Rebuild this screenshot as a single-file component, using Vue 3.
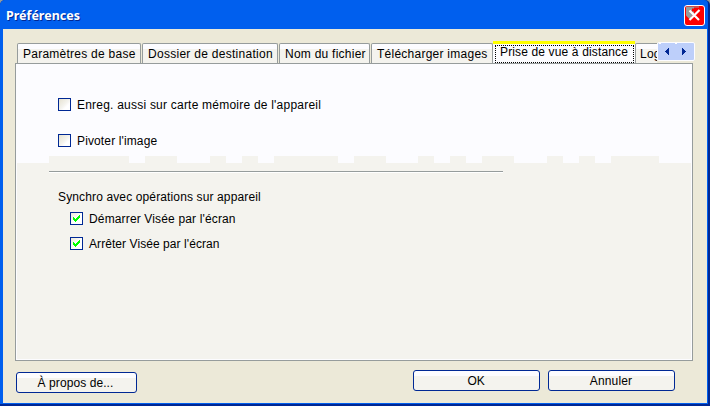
<script setup>
const tabs = [
  { label: 'Paramètres de base', cls: 't1' },
  { label: 'Dossier de destination', cls: 't2' },
  { label: 'Nom du fichier', cls: 't3' },
  { label: 'Télécharger images', cls: 't4' },
  { label: 'Prise de vue à distance', cls: 'active' },
  { label: 'Log', cls: 't6' },
]
const notches = [
  [49, 80], [145, 32], [210, 16], [242, 16], [274, 64], [354, 32], [418, 16],
  [450, 16], [482, 32], [547, 16], [579, 16], [611, 48],
]
</script>

<template>
  <div class="window">
    <header class="titlebar">
      <h1>Préférences</h1>
      <button class="close" aria-label="Fermer">
        <svg width="21" height="21" viewBox="0 0 21 21">
          <rect x=".5" y=".5" width="20" height="20" rx="2.5" fill="#ff0000" stroke="#fff" />
          <path d="M2 1.5h13v1h-5v1H8v3h2v3l-3 2 1 2H5l-3-3z" fill="#969c9c" />
          <path d="M5.5 5.5l9.5 9.5M15.5 5l-10 10" stroke="#fff" stroke-width="2.2" />
        </svg>
      </button>
    </header>
    <main class="client">
      <div class="tabrow">
        <nav class="tabs">
          <button v-for="t in tabs" :key="t.label" class="tab" :class="t.cls">
            <span>{{ t.label }}</span>
          </button>
        </nav>
        <div class="scroller">
          <svg width="38" height="19" viewBox="0 0 38 19" shape-rendering="crispEdges">
            <path d="M8 9h1v-1h1v-1h1v-1h1v7h-1v-1h-1v-1h-1v-1h-1z" fill="#002894" />
            <path d="M29 9h-1v-1h-1v-1h-1v-1h-1v7h1v-1h1v-1h1v-1h1z" fill="#002894" />
            <path d="M2 1h2v1H2zM18 1h2v1h-2z" fill="#fff" />
          </svg>
        </div>
      </div>
      <section class="panel">
        <div class="upper">
          <label class="check"><i class="box"></i><span class="c1">Enreg. aussi sur carte mémoire de l'appareil</span></label>
          <label class="check"><i class="box"></i><span class="c2">Pivoter l'image</span></label>
        </div>
        <svg class="edge" width="674" height="7" viewBox="17 0 674 7" shape-rendering="crispEdges">
          <rect x="17" width="674" height="7" fill="#fcfcff" />
          <rect v-for="n in notches" :key="n[0]" :x="n[0]" y="0" :width="n[1]" height="7" fill="#f4f3ee" />
        </svg>
        <div class="lower">
          <div class="rule"></div>
          <p><span class="c3">Synchro avec opérations sur appareil</span></p>
          <label class="check sub"><i class="box on"><svg width="11" height="11" viewBox="0 0 11 11" shape-rendering="crispEdges"><path d="M2 4h1v1h1v1h1v-1h1v-1h1v-1h1v-1h1v3h-1v1h-1v1h-1v1h-1v1h-1v-1h-1v-1h-1z" fill="#00ff00" /></svg></i><span class="c4">Démarrer Visée par l'écran</span></label>
          <label class="check sub"><i class="box on"><svg width="11" height="11" viewBox="0 0 11 11" shape-rendering="crispEdges"><path d="M2 4h1v1h1v1h1v-1h1v-1h1v-1h1v-1h1v3h-1v1h-1v1h-1v1h-1v1h-1v-1h-1v-1h-1z" fill="#00ff00" /></svg></i><span class="c5">Arrêter Visée par l'écran</span></label>
        </div>
      </section>
      <footer class="actions">
        <button class="btn about"><span>À propos de...</span></button>
        <button class="btn ok"><span>OK</span></button>
        <button class="btn cancel"><span>Annuler</span></button>
      </footer>
    </main>
  </div>
</template>

<style>
body { margin: 0; background: #969c9c; overflow: hidden; }
</style>

<style scoped>
* { box-sizing: border-box; }
.window {
  width: 710px; height: 406px; padding: 0 2px 2px 0;
  background: #002894; border-radius: 5px 5px 0 0;
  font: 12px/14px "Liberation Sans", Arial, sans-serif; color: #000; letter-spacing: .22px;
}
.titlebar {
  display: flex; justify-content: space-between; width: 708px; height: 29px;
  padding: 5px 3px 0 6px; background: #005fee; border-radius: 5px 4px 0 0;
}
h1 {
  margin: 2px 0 0; color: #fff; text-shadow: 1px 1px 0 #002894;
  font: bold 12.5px/18px "Noto Sans", "Open Sans", sans-serif; letter-spacing: 0;
}
button { padding: 0; border: 0; background: none; font: inherit; letter-spacing: inherit; color: inherit; }
.close { width: 21px; height: 21px; }
svg { display: block; }
span { white-space: nowrap; }
.client {
  width: 708px; height: 375px; padding: 12px 0 0 12px;
  border: solid #005fee; border-width: 0 1px 1px 3px; background: #ece9d8;
}
.tabrow { display: flex; align-items: flex-start; height: 22px; width: 680px; }
.tabs { display: flex; align-items: flex-end; width: 642px; height: 22px; padding-left: 2px; overflow: hidden; flex: none; }
.tab {
  flex: none; height: 20px; margin-right: 1px; text-align: left; padding: 0 0 0 5px;
  border: 1px solid #969c9c; border-bottom: 0; border-radius: 2px 2px 0 0;
  background: linear-gradient(#fcfcff 0 5px, #f4f3ee 5px);
}
.t1 { width: 124px; letter-spacing: .25px; }
.t2 { width: 136px; letter-spacing: .28px; }
.t3 { width: 91px; letter-spacing: .25px; }
.t4 { width: 122px; margin-right: 0; letter-spacing: .25px; }
.t6 { width: 60px; padding-left: 4px; }
.tab.active {
  width: 142px; height: 23px; margin: 0 0 -1px; padding: 0 1px 1px 2px;
  border: 0; border-top: 3px solid #ffff00; border-radius: 0; background: #fcfcff;
  position: relative; letter-spacing: .14px;
}
.active span { display: block; width: 139px; height: 18px; line-height: 13px; padding: 0 0 0 4px; border: 1px dotted #000; }
.scroller { width: 38px; height: 19px; margin-top: 1px; border: 1px solid #fcfcff; background: #bdcffa; border-radius: 2px; }
.scroller svg { margin: -1px; }
.panel {
  width: 678px; height: 298px; border: 1px solid #969c9c;
  background: #f4f3ee; box-shadow: inset -1px -1px #fcfcff, inset 1px 0 #fcfcff;
}
.upper { height: 92px; padding: 34px 0 0 42px; background: #fcfcff; }
.check { display: flex; gap: 6px; height: 13px; margin-bottom: 23px; line-height: 15px; }
.c2, .c3 { letter-spacing: .13px; }
.c4 { letter-spacing: .15px; }
.c5 { letter-spacing: .07px; }
.box {
  flex: none; width: 13px; height: 13px; border: 1px solid #002894;
  background: linear-gradient(135deg, #e6e2d0, #f4f3ee 50%, #fff 70%);
}
.box.on { background: linear-gradient(135deg, #ece9d8, #fff 55%); }
.edge { margin-left: 1px; }
.lower { padding: 8px 0 0 33px; }
.rule { width: 454px; height: 2px; background: linear-gradient(#969c9c 50%, #fff 50%); }
p { margin: 17px 0 8px 9px; }
.sub { margin: 0 0 12px 21px; }
.actions { display: flex; width: 660px; padding: 9px 0 0 1px; }
.btn {
  width: 127px; height: 21px; border: 1px solid #002894; border-radius: 3px;
  background: linear-gradient(#fcfcff 0 5px, #f4f3ee 5px);
}
.about { width: 121px; margin: 2px 276px 0 0; padding-right: 2px; letter-spacing: .08px; }
.ok { margin-right: 8px; padding-right: 1px; letter-spacing: -.1px; }
.cancel { letter-spacing: .15px; padding-right: 1px; }
</style>
